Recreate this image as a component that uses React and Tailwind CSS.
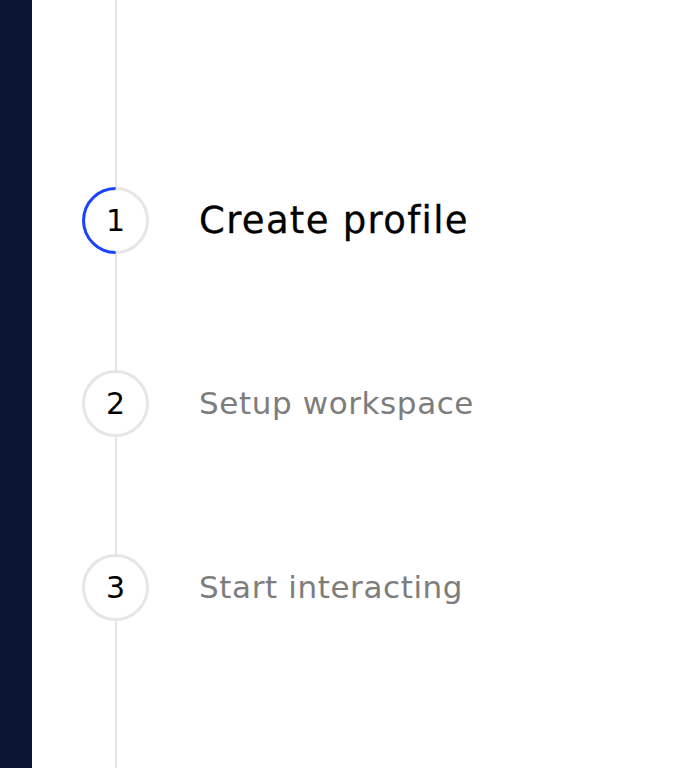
import React from 'react';

const steps = [
    { n: 1, label: 'Create profile', active: true },
    { n: 2, label: 'Setup workspace', active: false },
    { n: 3, label: 'Start interacting', active: false },
];

const Line = ({ className }) => (
    <div className={`w-[67px] flex justify-center ${className}`}>
        <div className="w-0.5 h-full bg-[#e4e4e4]"></div>
    </div>
);

const Step = ({ n, label, active }) => (
    <div className="flex items-center h-[67px]">
        <div className="relative w-[67px] h-[67px] shrink-0 rounded-full border-[3px] border-[#e6e6e6] flex items-center justify-center">
            {active && (
                <div className="absolute -inset-[3px] rounded-full border-[3px] border-t-transparent border-r-transparent border-l-[#1a44ff] border-b-[#1a44ff] rotate-45"></div>
            )}
            <span className="text-[30px] leading-none text-black">{n}</span>
        </div>
        <span
            className={
                active
                    ? 'ml-[50px] text-[37px] leading-none text-black tracking-[1.3px] whitespace-nowrap [-webkit-text-stroke:0.3px_black]'
                    : 'ml-[50px] text-[31px] leading-none text-[#7d7d7d] tracking-[0.6px] whitespace-nowrap'
            }
        >
            {label}
        </span>
    </div>
);

export default function App() {
    return (
        <div className="flex h-[768px] w-full bg-white overflow-hidden" style={{ fontFamily: '"DejaVu Sans", sans-serif' }}>
            {/* Sidebar strip */}
            <aside className="w-8 shrink-0 bg-[#0a1433]"></aside>

            {/* Stepper */}
            <main className="flex-1 flex flex-col pl-[50px]">
                <Line className="h-[187px] shrink-0" />
                <Step {...steps[0]} />
                <Line className="h-[116px] shrink-0" />
                <Step {...steps[1]} />
                <Line className="h-[117px] shrink-0" />
                <Step {...steps[2]} />
                <Line className="flex-1" />
            </main>
        </div>
    );
}
